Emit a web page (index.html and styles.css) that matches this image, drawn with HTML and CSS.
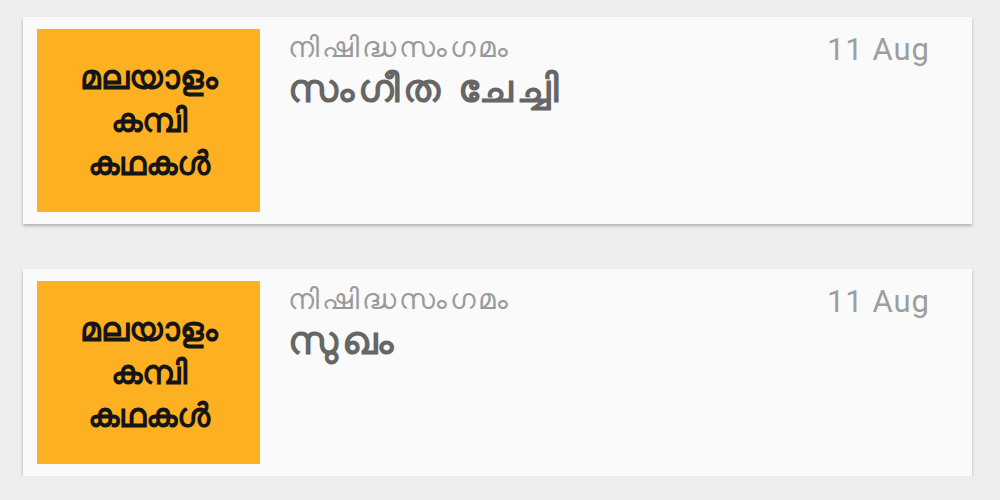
FILE: index.html
```html
<!DOCTYPE html>
<html lang="ml">
<head>
    <meta charset="UTF-8">
    <meta name="viewport" content="width=device-width, initial-scale=1.0">
    <title>കഥകൾ</title>
    <link rel="stylesheet" href="styles.css">
</head>
<body>
    <div class="story-list">
        <div class="story-card">
            <div class="thumb">
                <span>മലയാളം</span>
                <span>കമ്പി</span>
                <span>കഥകൾ</span>
            </div>
            <div class="story-info">
                <div class="story-category">നിഷിദ്ധസംഗമം</div>
                <div class="story-title">സംഗീത ചേച്ചി</div>
            </div>
            <div class="story-date">11 Aug</div>
        </div>

        <div class="story-card">
            <div class="thumb">
                <span>മലയാളം</span>
                <span>കമ്പി</span>
                <span>കഥകൾ</span>
            </div>
            <div class="story-info">
                <div class="story-category">നിഷിദ്ധസംഗമം</div>
                <div class="story-title">സുഖം</div>
            </div>
            <div class="story-date">11 Aug</div>
        </div>
    </div>
</body>
</html>
```

FILE: styles.css
```css
/* Story list page */
body {
    margin: 0;
    background-color: #eeeeee;
    font-family: Roboto, "Noto Sans", sans-serif;
}
.story-list {
    display: flex;
    flex-direction: column;
    gap: 45px;
    padding: 17px 28px 0 23px;
}
.story-card {
    display: flex;
    align-items: flex-start;
    height: 207px;
    padding: 12px 42px 0 14px;
    box-sizing: border-box;
    background-color: #fafafa;
    box-shadow: 0px 2px 3px rgba(0, 0, 0, 0.25);
}
.thumb {
    width: 223px;
    height: 183px;
    flex-shrink: 0;
    display: flex;
    flex-direction: column;
    justify-content: center;
    align-items: center;
    background-color: #fdb022;
    color: #151515;
    font-size: 33px;
    font-weight: 900;
    line-height: 43px;
}
.story-info {
    flex: 1;
    padding: 0 0 0 28px;
}
.story-category {
    font-size: 28px;
    letter-spacing: 3px;
    color: #9a9a9a;
    line-height: 38px;
}
.story-title {
    font-size: 39px;
    font-weight: bold;
    letter-spacing: 4px;
    color: #666666;
    line-height: 44px;
}
.story-date {
    padding-top: 2px;
    font-size: 31px;
    letter-spacing: 1px;
    color: #9e9e9e;
    line-height: 38px;
}
```
